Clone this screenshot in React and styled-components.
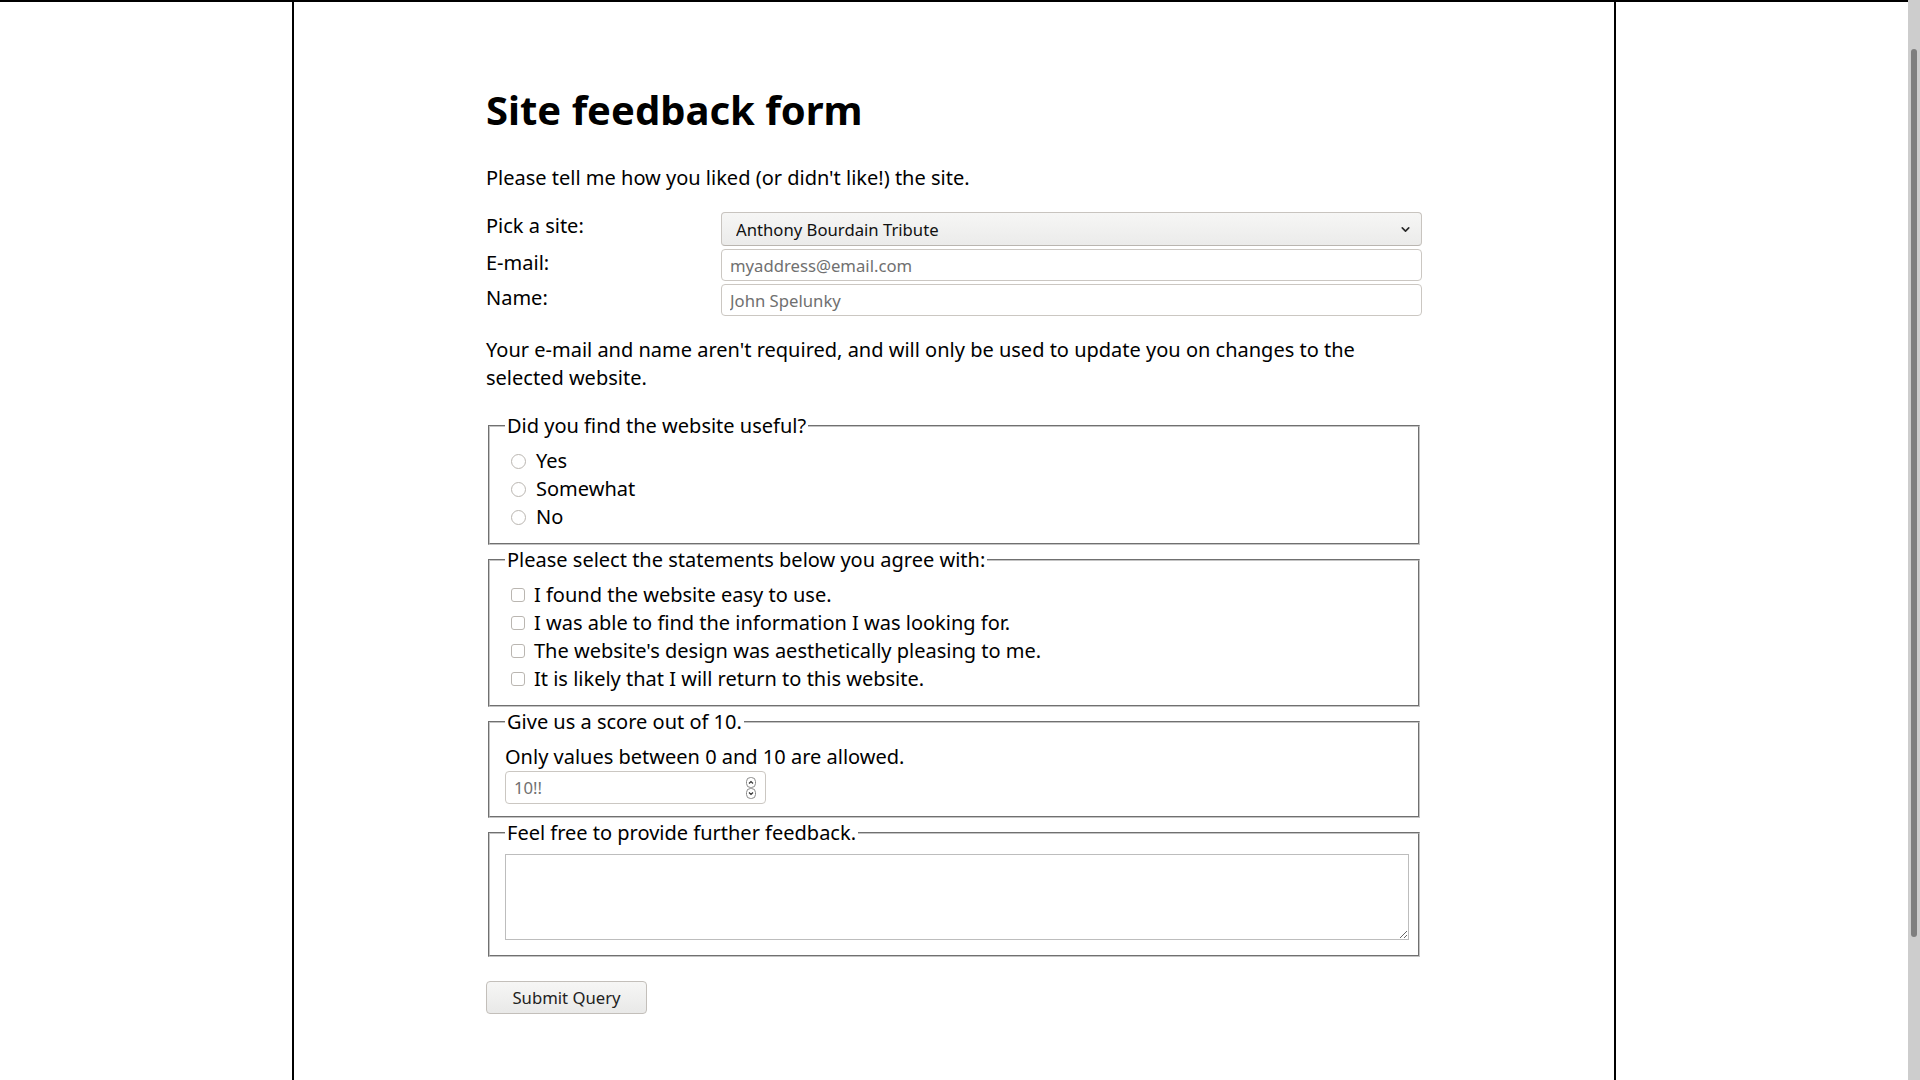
import React from "react";
import styled, { createGlobalStyle } from "styled-components";
import { ChevronDown } from "lucide-react";

const GlobalStyle = createGlobalStyle`
  html {
    background: #fff;
  }
  body {
    margin: 0;
    padding-right: 12px;
    border-top: 2px solid #000;
    font-family: "Noto Sans", "Open Sans", sans-serif;
    color: #000;
  }
`;

const sites = ["Anthony Bourdain Tribute", "Portfolio", "Recipe Box"];

const radios = ["Yes", "Somewhat", "No"];

const statements = [
  "I found the website easy to use.",
  "I was able to find the information I was looking for.",
  "The website's design was aesthetically pleasing to me.",
  "It is likely that I will return to this website.",
];

const App = () => {
  return (
    <>
      <GlobalStyle />
      <StyledPage>
        <Content>
          <Title>Site feedback form</Title>
          <Text>Please tell me how you liked (or didn't like!) the site.</Text>
          <form onSubmit={(e) => e.preventDefault()}>
            <FieldGrid>
              <Label htmlFor='site'>Pick a site:</Label>
              <SelectWrap>
                <Select id='site' defaultValue={sites[0]}>
                  {sites.map((s) => (
                    <option key={s}>{s}</option>
                  ))}
                </Select>
                <Chevron size={13} strokeWidth={3} />
              </SelectWrap>
              <Label htmlFor='email'>E-mail:</Label>
              <TextInput id='email' type='email' placeholder='myaddress@email.com' />
              <Label htmlFor='name'>Name:</Label>
              <TextInput id='name' type='text' placeholder='John Spelunky' />
            </FieldGrid>
            <Text>
              Your e-mail and name aren't required, and will only be used to update you on changes to the
              selected website.
            </Text>

            <Fieldset>
              <Legend>Did you find the website useful?</Legend>
              {radios.map((r) => (
                <Option key={r}>
                  <Radio type='radio' name='useful' value={r} />
                  {r}
                </Option>
              ))}
            </Fieldset>

            <Fieldset>
              <Legend>Please select the statements below you agree with:</Legend>
              {statements.map((s) => (
                <Option key={s} $check>
                  <Checkbox type='checkbox' />
                  {s}
                </Option>
              ))}
            </Fieldset>

            <Fieldset>
              <Legend>Give us a score out of 10.</Legend>
              <Hint>Only values between 0 and 10 are allowed.</Hint>
              <NumberBox>
                <NumberInput type='text' placeholder='10!!' />
                <Spinner width='10' height='22' viewBox='0 0 10 22'>
                  <rect x='0.5' y='0.5' width='9' height='10' rx='4' fill='#fff' stroke='#8a8a8a' />
                  <rect x='0.5' y='11.5' width='9' height='10' rx='4' fill='#fff' stroke='#8a8a8a' />
                  <path d='M3 6.5 L5 4.5 L7 6.5' fill='none' stroke='#333' strokeWidth='1.2' />
                  <path d='M3 15.5 L5 17.5 L7 15.5' fill='none' stroke='#333' strokeWidth='1.2' />
                </Spinner>
              </NumberBox>
            </Fieldset>

            <Fieldset>
              <Legend>Feel free to provide further feedback.</Legend>
              <TextArea />
            </Fieldset>

            <SubmitButton type='submit'>Submit Query</SubmitButton>
          </form>
        </Content>
      </StyledPage>
      <ScrollTrack>
        <ScrollThumb />
      </ScrollTrack>
    </>
  );
};

const StyledPage = styled.main`
  box-sizing: border-box;
  width: 1324px;
  min-height: 1270px;
  margin: 0 auto;
  padding: 54px 0 50px;
  border-left: 2px solid #000;
  border-right: 2px solid #000;
  font-size: 20px;
  line-height: 28px;
`;

const Content = styled.div`
  width: 936px;
  margin: 0 auto;
`;

const Title = styled.h1`
  font-size: 2em;
  font-weight: 700;
  line-height: 1.362;
  margin: 0.67em 0;
`;

const Text = styled.p`
  margin: 1em 0;
`;

const FieldGrid = styled.div`
  display: grid;
  grid-template-columns: 235px 1fr;
  row-gap: 3px;
  align-items: start;
`;

const Label = styled.label`
  line-height: 28px;
`;

const SelectWrap = styled.div`
  position: relative;
`;

const Select = styled.select`
  appearance: none;
  display: block;
  width: 100%;
  height: 34px;
  padding: 0 30px 0 14px;
  border: 1px solid #c8c4bf;
  border-bottom-color: #b9b5b0;
  border-radius: 4px;
  background: linear-gradient(#f6f6f5, #ebebea);
  font-family: "Noto Sans", sans-serif;
  font-size: 16.7px;
  color: #111;
`;

const Chevron = styled(ChevronDown)`
  position: absolute;
  right: 10px;
  top: 11px;
  color: #2a2a2a;
  pointer-events: none;
`;

const TextInput = styled.input`
  box-sizing: border-box;
  width: 100%;
  height: 32px;
  padding: 0 8px;
  border: 1px solid #cbc7c2;
  border-radius: 4px;
  background: #fff;
  font-family: "Noto Sans", sans-serif;
  font-size: 16.7px;
  &::placeholder {
    color: #707070;
  }
`;

const Fieldset = styled.fieldset`
  margin: 0 2px 1px;
  padding: 7px 15px 12px;
  border: 2px groove #c4c4c4;
`;

const Legend = styled.legend`
  padding: 0 2px;
`;

const Option = styled.label`
  display: flex;
  align-items: center;
  gap: ${(props) => (props.$check ? "9px" : "10px")};
  line-height: 28px;
  padding-left: 6px;
`;

const Radio = styled.input`
  appearance: none;
  flex: none;
  width: 15px;
  height: 15px;
  margin: 0;
  border: 1px solid #bab6b1;
  border-radius: 50%;
  background: #fff;
`;

const Checkbox = styled.input`
  appearance: none;
  flex: none;
  width: 14px;
  height: 14px;
  margin: 0 0 1px;
  border: 1px solid #bab6b1;
  border-radius: 3px;
  background: #fff;
`;

const Hint = styled.div`
  line-height: 28px;
`;

const NumberBox = styled.div`
  box-sizing: border-box;
  display: flex;
  align-items: center;
  width: 261px;
  height: 33px;
  padding: 0 9px 0 8px;
  border: 1px solid #cbc7c2;
  border-radius: 4px;
  background: #fff;
`;

const NumberInput = styled.input`
  flex: 1;
  min-width: 0;
  border: none;
  outline: none;
  padding: 0;
  font-family: "Noto Sans", sans-serif;
  font-size: 16.7px;
  &::placeholder {
    color: #707070;
  }
`;

const Spinner = styled.svg`
  flex: none;
`;

const TextArea = styled.textarea`
  display: block;
  box-sizing: content-box;
  width: 100%;
  height: 80px;
  margin-bottom: 3px;
  padding: 2px;
  border: 1px solid #bdbdbd;
  font-family: "Noto Sans", sans-serif;
  font-size: 16.7px;
`;

const SubmitButton = styled.button`
  display: block;
  width: 161px;
  height: 33px;
  margin-top: 24px;
  border: 1px solid #c3bfba;
  border-radius: 4px;
  background: linear-gradient(#f6f6f5, #e9e9e8);
  font-family: "Noto Sans", sans-serif;
  font-size: 16.7px;
  color: #222;
`;

const ScrollTrack = styled.div`
  position: fixed;
  top: 0;
  right: 0;
  bottom: 0;
  width: 12px;
  background: #cdcdcd;
`;

const ScrollThumb = styled.div`
  position: absolute;
  top: 49px;
  left: 3px;
  right: 3px;
  height: 888px;
  border-radius: 3px;
  background: #7f7f7f;
`;

export default App;
